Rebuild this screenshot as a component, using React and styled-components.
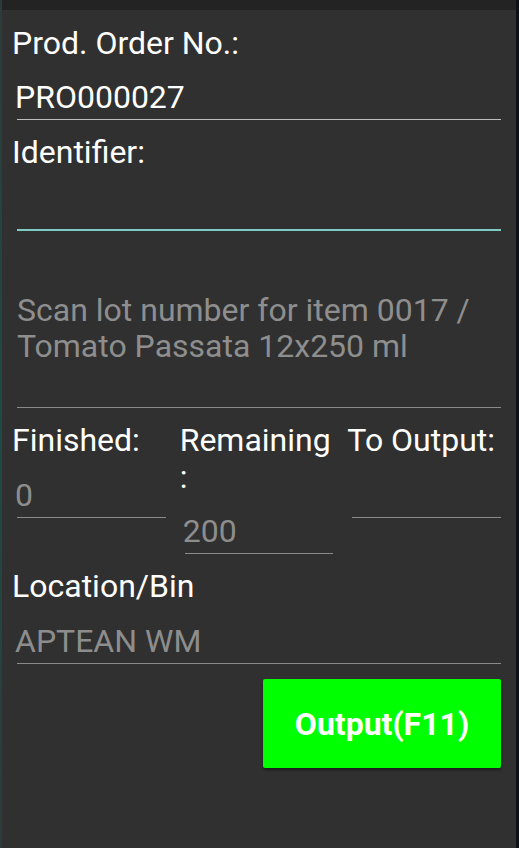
import React from 'react'
import styled, { createGlobalStyle } from 'styled-components'

const GlobalStyle = createGlobalStyle`
    html, body {
        margin: 0;
        padding: 0;
        background: #0d1117;
    }
    * {
        box-sizing: border-box;
    }
`

const Screen = styled.div`
    display: flex;
    width: 100%;
    height: 100vh;
    overflow: hidden;
    font-family: Roboto, "Noto Sans", sans-serif;
`

const Edge = styled.div`
    flex: 0 0 ${({ $w }) => $w}px;
    background: ${({ $bg }) => $bg};
`

const Dialog = styled.section`
    flex: 1;
    display: flex;
    flex-direction: column;
    background: #303030;
`

const TopBand = styled.div`
    height: 10px;
    background: #232323;
`

const Content = styled.div`
    display: flex;
    flex-direction: column;
    gap: 14px;
    padding: 14.5px 15px 0 10px;
`

const Field = styled.div`
    display: flex;
    flex-direction: column;
`

const Label = styled.div`
    font-size: 32px;
    line-height: 36.6px;
    color: #ffffff;
`

const Input = styled.div`
    margin: 18px 0 0 5px;
    padding-bottom: 3.5px;
    min-height: ${({ $thick }) => 36.6 + 3.5 + ($thick ? 2 : 1)}px;
    border-bottom: ${({ $thick }) => ($thick ? 2 : 1)}px solid ${({ $line }) => $line || '#8a8a8a'};
`

const Value = styled.div`
    margin-left: -2px;
    font-size: 32px;
    line-height: 36.6px;
    color: ${({ $muted }) => ($muted ? '#8d8d8d' : '#ffffff')};
    white-space: nowrap;
`

const Hint = styled.div`
    margin-left: 5px;
    padding: 47px 0 42px;
    border-bottom: 1px solid #8a8a8a;
    font-size: 32px;
    line-height: 36.6px;
    color: #8e8e8e;
`

const Counts = styled.div`
    display: grid;
    grid-template-columns: repeat(3, 1fr);
    column-gap: 14px;
    align-items: start;
`

const Actions = styled.div`
    display: flex;
    justify-content: flex-end;
    margin-top: 1px;
`

const OutputButton = styled.button`
    width: 238px;
    height: 89px;
    border: none;
    border-radius: 2px;
    background: #00ff00;
    color: #ffffff;
    font-family: Roboto, "Noto Sans", sans-serif;
    font-size: 32px;
    font-weight: 700;
    box-shadow: 0 2px 3px rgba(0, 0, 0, 0.45);
    cursor: pointer;
`

const counts = [
    { label: 'Finished:', value: '0' },
    { label: 'Remaining :', value: '200' },
    { label: 'To Output:', value: '' },
]

function App() {
    return (
        <>
            <GlobalStyle />
            <Screen>
                <Edge $w={2} $bg="linear-gradient(180deg, #2c3b39 0%, #1f4a44 50%, #2c3b39 100%)" />
                <Dialog>
                    <TopBand />
                    <Content>
                        <Field>
                            <Label>Prod. Order No.:</Label>
                            <Input $line="#bdbdbd">
                                <Value>PRO000027</Value>
                            </Input>
                        </Field>
                        <Field>
                            <Label>Identifier:</Label>
                            <Input $thick $line="#80cbc4" />
                        </Field>
                        <Hint>
                            Scan lot number for item 0017 / Tomato Passata 12x250 ml
                        </Hint>
                        <Counts>
                            {counts.map((c) => (
                                <Field key={c.label}>
                                    <Label>{c.label}</Label>
                                    <Input>
                                        <Value $muted>{c.value}</Value>
                                    </Input>
                                </Field>
                            ))}
                        </Counts>
                        <Field>
                            <Label>Location/Bin</Label>
                            <Input>
                                <Value $muted>APTEAN WM</Value>
                            </Input>
                        </Field>
                        <Actions>
                            <OutputButton type="button">Output(F11)</OutputButton>
                        </Actions>
                    </Content>
                </Dialog>
                <Edge $w={3} $bg="#0d1117" />
            </Screen>
        </>
    )
}

export default App
